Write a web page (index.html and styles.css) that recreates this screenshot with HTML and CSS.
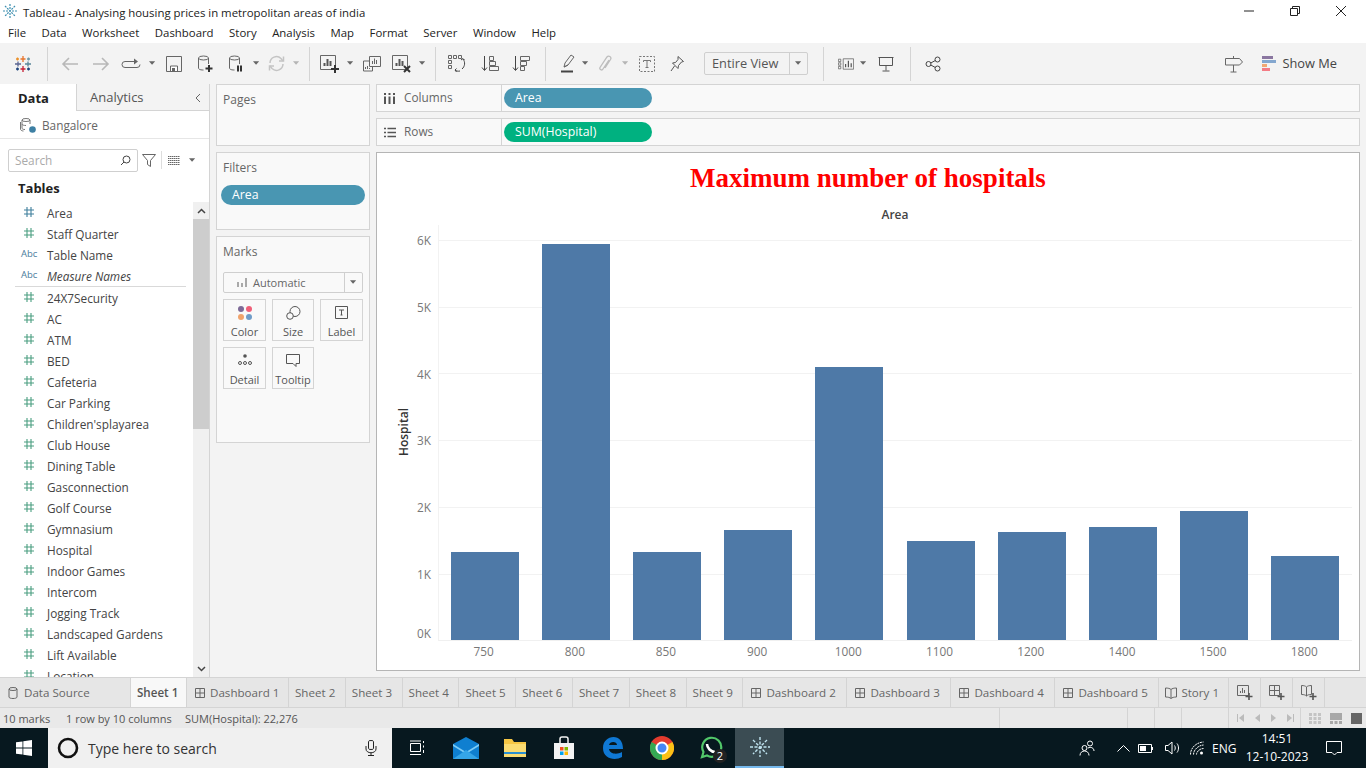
FILE: index.html
```html
<!DOCTYPE html>
<html lang="en">
<head>
  <meta charset="UTF-8">
  <title>Tableau - Analysing housing prices in metropolitan areas of india</title>
  <link rel="stylesheet" href="styles.css">
</head>
<body>
  <svg class="defs">
    <symbol id="num" viewBox="0 0 12 12"><path d="M4 1v10M8 1v10M1 4h10M1 8h10" fill="none" stroke="currentColor" stroke-width="1.1"/></symbol>
    <symbol id="dash" viewBox="0 0 12 12"><path d="M1.5 1.5h9v9h-9zM6 1.5v9M1.5 6h9" fill="none" stroke="#666"/></symbol>
    <symbol id="caret" viewBox="0 0 8 5"><path d="M0 0h7L3.500 4z" fill="#666"/></symbol>
    <symbol id="caret-off" viewBox="0 0 8 5"><path d="M0 0h7L3.500 4z" fill="#b5b5b5"/></symbol>
  </svg>

  <header class="titlebar">
    <svg class="app-icon" width="14" height="14" viewBox="0 0 14 14"><path d="M7 0v14M0 7h14M2 2l10 10M12 2L2 12" stroke="#3d8fb0" stroke-width="1.200" stroke-dasharray="2 1"/></svg>
    <span class="title-text">Tableau - Analysing housing prices in metropolitan areas of india</span>
    <div class="win-btns">
      <svg width="12" height="12" viewBox="0 0 12 12"><path d="M1 6h10" stroke="#222"/></svg>
      <svg width="12" height="12" viewBox="0 0 12 12"><path d="M1.500 3.500h7v7h-7zM3.500 3V1.500h7v7H9" fill="none" stroke="#222"/></svg>
      <svg width="12" height="12" viewBox="0 0 12 12"><path d="M1 1l10 10M11 1L1 11" stroke="#222"/></svg>
    </div>
  </header>

  <nav class="menubar">
    <span>File</span><span>Data</span><span>Worksheet</span><span>Dashboard</span><span>Story</span><span>Analysis</span><span>Map</span><span>Format</span><span>Server</span><span>Window</span><span>Help</span>
  </nav>

  <div class="toolbar">
    <div class="tb w30"><svg width="18" height="18" viewBox="0 0 18 18" fill="none" stroke-width="1.300"><path d="M9 1v6M6.500 4h5" stroke="#e8762c"/><path d="M9 11v6M6.500 14h5" stroke="#c72035"/><path d="M1 9h6M4 6.500v5" stroke="#5b6591"/><path d="M11 9h6M14 6.500v5" stroke="#59879b"/><path d="M3.500 2.500v3M2 4h3" stroke="#eb912b"/><path d="M14.500 2.500v3M13 4h3" stroke="#7099a6"/><path d="M3.500 12.500v3M2 14h3" stroke="#1f447d"/><path d="M14.500 12.500v3M13 14h3" stroke="#1f447d"/></svg></div>
    <div class="tb w18"><i class="sep"></i></div>
    <div class="tb w28"><svg width="18" height="14" viewBox="0 0 18 14" fill="none" stroke="#b8b8b8" stroke-width="1.600"><path d="M17 7H2M8 1L2 7l6 6"/></svg></div>
    <div class="tb w34"><svg width="18" height="14" viewBox="0 0 18 14" fill="none" stroke="#b8b8b8" stroke-width="1.600"><path d="M1 7h15M10 1l6 6-6 6"/></svg></div>
    <div class="tb w26"><svg width="20" height="12" viewBox="0 0 20 12" fill="none" stroke="#666"><path d="M14 3.500H4a3 3 0 0 0 0 6h12a3 3 0 0 0 3-3"/><path d="M13 .5v6l4-3z" fill="#666" stroke="none"/></svg></div>
    <div class="tb w16"><svg class="cr"><use href="#caret"/></svg></div>
    <div class="tb w28"><svg width="16" height="16" viewBox="0 0 16 16" fill="none" stroke="#666"><path d="M.5.500h15v15H.5z"/><path d="M4.500 15v-5h7v5" fill="#fff"/><path d="M6 12h3v3H6z" fill="#666" stroke="none"/></svg></div>
    <div class="tb w34"><svg width="16" height="18" viewBox="0 0 16 18" fill="none" stroke="#666"><ellipse cx="6.500" cy="3" rx="5" ry="2"/><path d="M1.500 3v10c0 1 1 2 5 2M11.500 3v6"/><path d="M12 10v7M8.500 13.500h7" stroke="#333" stroke-width="2"/></svg></div>
    <div class="tb w28"><svg width="16" height="18" viewBox="0 0 16 18" fill="none" stroke="#666"><ellipse cx="6.500" cy="3" rx="5" ry="2"/><path d="M1.500 3v10c0 1 1 2 5 2M11.500 3v6"/><path d="M10 10.500v6M13 10.500v6" stroke="#333" stroke-width="2"/></svg></div>
    <div class="tb w12"><svg class="cr"><use href="#caret"/></svg></div>
    <div class="tb w28"><svg width="17" height="17" viewBox="0 0 17 17" fill="none" stroke="#c4c4c4" stroke-width="1.500"><path d="M2 8a6.500 6.500 0 0 1 11-4.500L15 6M15 9a6.500 6.500 0 0 1-11 4.500L2 11"/><path d="M15.500 1.500V6H11M1.500 15.500V11H6"/></svg></div>
    <div class="tb w12"><svg class="cr"><use href="#caret-off"/></svg></div>
    <div class="tb w14"><i class="sep"></i></div>
    <div class="tb w28"><svg width="20" height="18" viewBox="0 0 20 18" fill="none" stroke="#666"><path d="M.5.500h15v14H.5z"/><path d="M4.500 11V8M7.500 11V4M10.500 11V6" stroke="#555" stroke-width="2"/><path d="M15 10v8M11 14h8" stroke="#333" stroke-width="2"/></svg></div>
    <div class="tb w12"><svg class="cr"><use href="#caret"/></svg></div>
    <div class="tb w32"><svg width="18" height="16" viewBox="0 0 18 16" fill="none" stroke="#666"><path d="M6.500.500h11v10h-11z"/><path d="M9.500 8V5M11.500 8V2.500M13.500 8V4"/><path d="M6 5H.5v10h9v-4"/><path d="M2.500 13v-2M4.500 13v-3M6.500 13v-1"/></svg></div>
    <div class="tb w28"><svg width="20" height="18" viewBox="0 0 20 18" fill="none" stroke="#666"><path d="M.5.500h15v14H.5z"/><path d="M4.500 11V8M7.500 11V4M10.500 11V6" stroke="#555" stroke-width="2"/><path d="M12 11l6 6M18 11l-6 6" stroke="#333" stroke-width="2"/></svg></div>
    <div class="tb w12"><svg class="cr"><use href="#caret"/></svg></div>
    <div class="tb w14"><i class="sep"></i></div>
    <div class="tb w30"><svg width="18" height="18" viewBox="0 0 18 18" fill="none" stroke="#666"><path d="M.5.500h3v3h-3zM5.500.500h3v3h-3zM10.500.500h3v3h-3zM.5 5.500h3v3h-3zM.5 10.500h3v3h-3z"/><path d="M15 4c2.500 3 2 7.500-1 10M12 16c-2 .5-4 0-5-1" stroke="#444"/><path d="M13 5l2-1.500L16.500 5M8.500 13.500L7 15l1.500 2" stroke="#444"/></svg></div>
    <div class="tb w36"><svg width="18" height="18" viewBox="0 0 18 18" fill="none" stroke="#666"><path d="M3.500 1v14M1 12.500l2.500 3 2.500-3" stroke="#444"/><path d="M8.500 1.500h4v4h-4zM8.500 6.500h6v4h-6zM8.500 11.500h9v4h-9z"/></svg></div>
    <div class="tb w26"><svg width="18" height="18" viewBox="0 0 18 18" fill="none" stroke="#666"><path d="M3.500 1v14M1 12.500l2.500 3 2.500-3" stroke="#444"/><path d="M8.500 1.500h9v4h-9zM8.500 6.500h6v4h-6zM8.500 11.500h4v4h-4z"/></svg></div>
    <div class="tb w22"><i class="sep"></i></div>
    <div class="tb w24"><svg width="14" height="19" viewBox="0 0 14 19" fill="none" stroke="#666"><path d="M3 13l1-4 6-8 3 2-6 8zM3 13l4-2"/><path d="M0 17.500h12" stroke="#444" stroke-width="2"/></svg></div>
    <div class="tb w10"><svg class="cr"><use href="#caret"/></svg></div>
    <div class="tb w30"><svg width="14" height="18" viewBox="0 0 14 18" fill="none" stroke="#bdbdbd" stroke-width="1.300"><path d="M11 5l-6 9c-1 2-4 .5-3-1.500L9 2c1.500-2 5 0 3.500 2.500L7 13"/></svg></div>
    <div class="tb w10"><svg class="cr"><use href="#caret-off"/></svg></div>
    <div class="tb w34"><svg width="16" height="16" viewBox="0 0 16 16" fill="none" stroke="#777"><path d="M.5.500h15v15H.5z" stroke-dasharray="2 1.500"/><path d="M4.500 4.500h7M8 4.500v7M6.500 11.500h3M4.500 4.500V6M11.500 4.500V6"/></svg></div>
    <div class="tb w26"><svg width="14" height="16" viewBox="0 0 14 16" fill="none" stroke="#555"><path d="M8 .5l5.500 5-2 .5-3 3.500-.5 3L2.500 7l3-.5L8 3.500zM4.500 10l-3.500 5"/></svg></div>
    <div class="tb w14"></div>
    <div class="fit-select"><span class="fit-text">Entire View</span><span class="fit-drop"><svg class="cr"><use href="#caret"/></svg></span></div>
    <div class="tb w30"><i class="sep"></i></div>
    <div class="tb w16"><svg width="20" height="14" viewBox="0 0 20 14" fill="none" stroke="#666"><path d="M.5 1h3v3h-3zM.5 5.500h3v3h-3zM.5 10h3v3h-3zM6.500.5h13v13h-13z"/><path d="M9.500 11V7M13 11V3M16.500 11V6" stroke="#555" stroke-width="1.500"/></svg></div>
    <div class="tb w18 cr-left"><svg class="cr"><use href="#caret"/></svg></div>
    <div class="tb w28"><svg width="16" height="16" viewBox="0 0 16 16" fill="none" stroke="#555"><path d="M.5 1.500h15M1.500 1.500v8h13v-8M8 9.500v5M4.500 15h7"/></svg></div>
    <div class="tb w20"><i class="sep"></i></div>
    <div class="tb w26"><svg width="16" height="16" viewBox="0 0 16 16" fill="none" stroke="#444"><circle cx="3.500" cy="8" r="2.500"/><circle cx="12.500" cy="3.500" r="2.500"/><circle cx="12.500" cy="12.500" r="2.500"/><path d="M5.800 7l4.500-2.500M5.800 9l4.500 2.500"/></svg></div>
    <div class="toolbar-right">
      <svg width="18" height="18" viewBox="0 0 18 18" fill="none" stroke="#666"><path d="M.5 3.500h14l3 3.500-3 3H.5zM8.500 1v2.500M8.500 10v7M5.500 17h6"/></svg>
      <span class="showme">
        <svg width="15" height="15" viewBox="0 0 15 15"><path d="M0 0h11v3H0z" fill="#8a76a0"/><path d="M0 4h14v3H0z" fill="#84a7cf"/><path d="M0 8h5v3H0z" fill="#f2a873"/><path d="M0 12h8v3H0z" fill="#f47c85"/></svg>
        Show Me
      </span>
    </div>
  </div>

  <main class="workspace">
    <aside class="data-pane">
      <div class="pane-tabs">
        <span class="pane-tab active">Data</span>
        <span class="pane-tab">Analytics</span>
        <svg class="collapse" width="8" height="10" viewBox="0 0 8 10"><path d="M6 1L2 5l4 4" fill="none" stroke="#666"/></svg>
      </div>
      <div class="source">
        <svg width="16" height="16" viewBox="0 0 16 16" fill="none" stroke="#777"><ellipse cx="6" cy="3" rx="4" ry="1.500"/><path d="M2 3v8c0 1 1 1.500 3 1.500M10 3v4M.5 5v7c0 1 1 2 3 2"/><path d="M2 7c0 1 2 1.500 4 1.500"/><circle cx="12.500" cy="12.500" r="3.300" fill="#3d7fa3" stroke="none"/></svg>
        Bangalore
      </div>
      <div class="search-row">
        <div class="search"><span>Search</span><svg width="11" height="11" viewBox="0 0 11 11" fill="none" stroke="#444"><circle cx="6.500" cy="4.500" r="3.500"/><path d="M4 7L1 10"/></svg></div>
        <svg width="14" height="13" viewBox="0 0 14 13" fill="none" stroke="#666"><path d="M.5.500h13L8.500 6.500v6l-3-2v-4z"/></svg>
        <i class="mini-sep"></i>
        <svg width="12" height="9" viewBox="0 0 12 9" fill="none" stroke="#666" stroke-dasharray="1.500 .5"><path d="M0 .5h12M0 2.500h12M0 4.500h12M0 6.500h12M0 8.500h12"/></svg>
        <svg class="cr"><use href="#caret"/></svg>
      </div>
      <h2 class="tables-head">Tables</h2>
      <div class="field-area">
        <ul class="fields">
          <li class="field dim"><svg class="hash"><use href="#num"/></svg>Area</li>
          <li class="field"><svg class="hash"><use href="#num"/></svg>Staff Quarter</li>
          <li class="field"><span class="abc">Abc</span>Table Name</li>
          <li class="field split"><span class="abc">Abc</span><em>Measure Names</em></li>
          <li class="field"><svg class="hash"><use href="#num"/></svg>24X7Security</li>
          <li class="field"><svg class="hash"><use href="#num"/></svg>AC</li>
          <li class="field"><svg class="hash"><use href="#num"/></svg>ATM</li>
          <li class="field"><svg class="hash"><use href="#num"/></svg>BED</li>
          <li class="field"><svg class="hash"><use href="#num"/></svg>Cafeteria</li>
          <li class="field"><svg class="hash"><use href="#num"/></svg>Car Parking</li>
          <li class="field"><svg class="hash"><use href="#num"/></svg>Children'splayarea</li>
          <li class="field"><svg class="hash"><use href="#num"/></svg>Club House</li>
          <li class="field"><svg class="hash"><use href="#num"/></svg>Dining Table</li>
          <li class="field"><svg class="hash"><use href="#num"/></svg>Gasconnection</li>
          <li class="field"><svg class="hash"><use href="#num"/></svg>Golf Course</li>
          <li class="field"><svg class="hash"><use href="#num"/></svg>Gymnasium</li>
          <li class="field"><svg class="hash"><use href="#num"/></svg>Hospital</li>
          <li class="field"><svg class="hash"><use href="#num"/></svg>Indoor Games</li>
          <li class="field"><svg class="hash"><use href="#num"/></svg>Intercom</li>
          <li class="field"><svg class="hash"><use href="#num"/></svg>Jogging Track</li>
          <li class="field"><svg class="hash"><use href="#num"/></svg>Landscaped Gardens</li>
          <li class="field"><svg class="hash"><use href="#num"/></svg>Lift Available</li>
          <li class="field"><svg class="hash"><use href="#num"/></svg>Location</li>
        </ul>
        <div class="scrollbar">
          <div class="scroll-btn"><svg width="9" height="6" viewBox="0 0 9 6"><path d="M1 5l3.500-3.500L8 5" fill="none" stroke="#444" stroke-width="1.500"/></svg></div>
          <div class="scroll-thumb"></div>
          <div class="scroll-btn end"><svg width="9" height="6" viewBox="0 0 9 6"><path d="M1 1l3.500 3.500L8 1" fill="none" stroke="#444" stroke-width="1.500"/></svg></div>
        </div>
      </div>
    </aside>

    <section class="cards">
      <div class="card pages"><h3>Pages</h3></div>
      <div class="card filters">
        <h3>Filters</h3>
        <div class="pill blue">Area</div>
      </div>
      <div class="card marks">
        <h3>Marks</h3>
        <div class="mark-select">
          <svg width="10" height="9" viewBox="0 0 10 9"><path d="M0 4h2v5H0zM4 5h2v4H4zM8 0h2v9H8z" fill="#a9a9a9"/></svg>
          <span>Automatic</span>
          <span class="mark-drop"><svg class="cr"><use href="#caret"/></svg></span>
        </div>
        <div class="mark-grid">
          <div class="mark-btn"><svg width="16" height="14" viewBox="0 0 16 14"><circle cx="4" cy="3" r="3" fill="#7d6a97"/><circle cx="12" cy="3" r="3" fill="#ef5f78"/><circle cx="4" cy="11" r="3" fill="#f0a36c"/><circle cx="12" cy="11" r="3" fill="#6f9cc8"/></svg>Color</div>
          <div class="mark-btn"><svg width="15" height="14" viewBox="0 0 15 14" fill="none" stroke="#555"><circle cx="9" cy="5.500" r="5"/><circle cx="4" cy="10" r="3.300" fill="#f9f9f9"/></svg>Size</div>
          <div class="mark-btn"><svg width="13" height="13" viewBox="0 0 13 13" fill="none" stroke="#555"><path d="M.5.500h12v12H.5zM4 4h5M6.500 4v5M5.500 9h2"/></svg>Label</div>
          <div class="mark-btn"><svg width="14" height="12" viewBox="0 0 14 12" fill="none" stroke="#555"><circle cx="7" cy="2" r="1.800" fill="#555" stroke="none"/><circle cx="2" cy="9" r="1.500"/><circle cx="7" cy="9" r="1.500"/><circle cx="12" cy="9" r="1.500"/></svg>Detail</div>
          <div class="mark-btn"><svg width="14" height="13" viewBox="0 0 14 13" fill="none" stroke="#555"><path d="M.5.500h13v9H10v3l-3-3H.5z"/></svg>Tooltip</div>
        </div>
      </div>
    </section>

    <section class="sheet">
      <div class="shelf">
        <div class="shelf-label"><svg width="12" height="11" viewBox="0 0 12 11"><path d="M1 0v2M5.500 0v2M10 0v2" stroke="#555" stroke-width="2"/><path d="M1 3.500V11M5.500 3.500V11M10 3.500V11" stroke="#555" stroke-width="2"/></svg><span>Columns</span></div>
        <div class="shelf-body"><div class="pill blue shelf-pill">Area</div></div>
      </div>
      <div class="shelf">
        <div class="shelf-label"><svg width="12" height="11" viewBox="0 0 12 11"><path d="M0 1.500h2M0 5.500h2M0 9.500h2M3.500 1.500H12M3.500 5.500H12M3.500 9.500H12" stroke="#555" stroke-width="1.600"/></svg><span>Rows</span></div>
        <div class="shelf-body"><div class="pill green shelf-pill">SUM(Hospital)</div></div>
      </div>

      <div class="view">
        <h1 class="view-title">Maximum number of hospitals</h1>
        <div class="chart">
          <div class="y-title"><span>Hospital</span></div>
          <div class="y-axis">
            <span>6K</span><span>5K</span><span>4K</span><span>3K</span><span>2K</span><span>1K</span><span>0K</span>
          </div>
          <div class="chart-main">
            <div class="x-title">Area</div>
            <div class="plot">
              <div class="grid-row"></div><div class="grid-row"></div><div class="grid-row"></div>
              <div class="grid-row"></div><div class="grid-row"></div><div class="grid-row"></div>
              <div class="bars">
                <div class="bin"><div class="bar" style="height:88px"></div></div>
                <div class="bin"><div class="bar" style="height:396px"></div></div>
                <div class="bin"><div class="bar" style="height:88px"></div></div>
                <div class="bin"><div class="bar" style="height:110px"></div></div>
                <div class="bin"><div class="bar" style="height:273px"></div></div>
                <div class="bin"><div class="bar" style="height:99px"></div></div>
                <div class="bin"><div class="bar" style="height:108px"></div></div>
                <div class="bin"><div class="bar" style="height:113px"></div></div>
                <div class="bin"><div class="bar" style="height:129px"></div></div>
                <div class="bin"><div class="bar" style="height:84px"></div></div>
              </div>
            </div>
            <div class="x-axis">
              <span>750</span><span>800</span><span>850</span><span>900</span><span>1000</span><span>1100</span><span>1200</span><span>1400</span><span>1500</span><span>1800</span>
            </div>
          </div>
        </div>
      </div>
    </section>
  </main>

  <div class="tabs">
    <div class="tab source-tab"><svg width="10" height="12" viewBox="0 0 10 12" fill="none" stroke="#666"><ellipse cx="5" cy="2" rx="4" ry="1.500"/><path d="M1 2v8c0 1 2 1.500 4 1.500s4-.5 4-1.500V2"/></svg>Data Source</div>
    <div class="tab current">Sheet 1</div>
    <div class="tab dash first"><svg class="tab-icon"><use href="#dash"/></svg>Dashboard 1</div>
    <div class="tab plain">Sheet 2</div>
    <div class="tab plain">Sheet 3</div>
    <div class="tab plain">Sheet 4</div>
    <div class="tab plain">Sheet 5</div>
    <div class="tab plain">Sheet 6</div>
    <div class="tab plain">Sheet 7</div>
    <div class="tab plain">Sheet 8</div>
    <div class="tab plain">Sheet 9</div>
    <div class="tab dash"><svg class="tab-icon"><use href="#dash"/></svg>Dashboard 2</div>
    <div class="tab dash"><svg class="tab-icon"><use href="#dash"/></svg>Dashboard 3</div>
    <div class="tab dash"><svg class="tab-icon"><use href="#dash"/></svg>Dashboard 4</div>
    <div class="tab dash"><svg class="tab-icon"><use href="#dash"/></svg>Dashboard 5</div>
    <div class="tab story"><svg width="12" height="12" viewBox="0 0 12 12" fill="none" stroke="#666"><path d="M6 2.500C5 1.500 3 1 .5 1v9c2.500 0 4.500.5 5.500 1.500 1-1 3-1.500 5.500-1.500V1C9 1 7 1.500 6 2.500zM6 2.500v9"/></svg>Story 1</div>
    <div class="tab add"><svg width="16" height="15" viewBox="0 0 16 15" fill="none" stroke="#666"><path d="M.5.500h11v10H.5zM3.500 8V6M5.500 8V3M7.500 8V5"/><path d="M12 8v7M8.500 11.500h7" stroke="#555" stroke-width="1.600"/></svg></div>
    <div class="tab add"><svg width="16" height="15" viewBox="0 0 16 15" fill="none" stroke="#666"><path d="M.5.500h10v10H.5zM5.500.5v10M.5 5.500h10"/><path d="M12 8v7M8.500 11.500h7" stroke="#555" stroke-width="1.600"/></svg></div>
    <div class="tab add"><svg width="16" height="15" viewBox="0 0 16 15" fill="none" stroke="#666"><path d="M5.500 2C4.500 1 3 .5.500.5v9c2.500 0 4 .5 5 1.500 1-1 2-1.500 5-1.500v-9C8 .5 6.500 1 5.500 2zM5.500 2v9"/><path d="M12 8v7M8.500 11.500h7" stroke="#555" stroke-width="1.600"/></svg></div>
  </div>

  <footer class="statusbar">
    <span class="stat marks-count">10 marks</span>
    <span class="stat rows-count">1 row by 10 columns</span>
    <span class="stat sum">SUM(Hospital): 22,276</span>
    <i class="stat-cell c1"></i><i class="stat-cell c2"></i><i class="stat-cell c3"></i><i class="stat-cell c4"></i><i class="stat-cell c5"></i>
    <div class="pager">
      <svg width="7" height="8" viewBox="0 0 7 8"><path d="M0 0h1v8H0zM7 0v8L2 4z" fill="#bbb"/></svg>
      <svg width="5" height="8" viewBox="0 0 5 8"><path d="M5 0v8L0 4z" fill="#bbb"/></svg>
      <svg width="5" height="8" viewBox="0 0 5 8"><path d="M0 0v8l5-4z" fill="#bbb"/></svg>
      <svg width="7" height="8" viewBox="0 0 7 8"><path d="M6 0h1v8H6zM0 0v8l5-4z" fill="#bbb"/></svg>
    </div>
    <div class="thumbs">
      <svg width="12" height="11" viewBox="0 0 12 11"><path d="M0 0h3v3H0zM4.500 0h3v3h-3zM9 0h3v3H9zM0 4h3v3H0zM4.500 4h3v3h-3zM9 4h3v3H9zM0 8h3v3H0zM4.500 8h3v3h-3zM9 8h3v3H9z" fill="#c4c4c4"/></svg>
      <svg width="12" height="11" viewBox="0 0 12 11"><path d="M0 0h12v7H0zM0 8h3v3H0zM4.500 8h3v3h-3zM9 8h3v3H9z" fill="#a8a8a8"/></svg>
      <svg width="11" height="11" viewBox="0 0 11 11"><path d="M0 0h11v11H0z" fill="#666"/></svg>
    </div>
  </footer>

  <div class="taskbar">
    <div class="start"><svg width="16" height="16" viewBox="0 0 16 16"><path d="M0 2.300l6.500-.9v6.200H0zM7.300 1.300L16 0v7.600H7.300zM0 8.400h6.500v6.200L0 13.700zM7.300 8.400H16V16l-8.700-1.300z" fill="#fff"/></svg></div>
    <div class="task-search">
      <svg width="22" height="22" viewBox="0 0 22 22"><circle cx="11" cy="11" r="9" fill="none" stroke="#111" stroke-width="2.600"/></svg>
      <span>Type here to search</span>
      <svg class="mic" width="12" height="16" viewBox="0 0 12 16" fill="none" stroke="#222"><path d="M3.500 1.500a2.500 1 0 0 1 5 0v7a2.500 1 0 0 1-5 0zM1 6v3c0 5 10 5 10 0V6M6 13v2.500M3 15.500h6"/></svg>
    </div>
    <div class="task-apps">
      <div class="app"><svg width="16" height="16" viewBox="0 0 16 16" fill="none" stroke="#fff"><path d="M1.500 3.500h10v8h-10zM1 1h11M1 14.500h11M14.500 1v2M14.500 5.500v2M14.500 10v3"/></svg></div>
      <div class="app"><svg width="26" height="22" viewBox="0 0 26 22"><path d="M0 7l13-7 13 7v15H0z" fill="#0f7fd0"/><path d="M0 7l13 8 13-8v2l-13 8L0 9z" fill="#7dccf5"/><path d="M0 22l13-9 13 9z" fill="#35a5e8"/></svg></div>
      <div class="app"><svg width="24" height="20" viewBox="0 0 24 20"><path d="M1 1h8l2 3h12v15H1z" fill="#f6c644"/><path d="M1 6h22v13H1z" fill="#fbdc72"/><path d="M1 14h22v2H1z" fill="#2a8fd0"/></svg></div>
      <div class="app"><svg width="22" height="24" viewBox="0 0 22 24"><path d="M1 7h20v16H1z" fill="#f3f3f3"/><path d="M7 7V3a2 2 0 0 1 2-2h4a2 2 0 0 1 2 2v4" fill="none" stroke="#f3f3f3" stroke-width="1.500"/><path d="M7 11h3.500v3.500H7z" fill="#f25022"/><path d="M11.500 11H15v3.500h-3.500z" fill="#7fba00"/><path d="M7 15.500h3.500V19H7z" fill="#00a4ef"/><path d="M11.500 15.500H15V19h-3.500z" fill="#ffb900"/></svg></div>
      <div class="app"><svg width="22" height="24" viewBox="0 0 22 24"><path d="M1 12C1 5 6 1 11.500 1 17 1 21 5 21 13H7c.5 5 8 6 13 3v5c-7 4-19 2-19-9zM7 9h8c0-4-7.500-4-8 0z" fill="#0f78d4"/></svg></div>
      <div class="app"><svg width="24" height="24" viewBox="0 0 24 24"><circle cx="12" cy="12" r="12" fill="#e33b2e"/><path d="M12 12L22.400 6A12 12 0 0 1 12 24z" fill="#fbc116"/><path d="M12 12L12 24A12 12 0 0 1 1.600 6z" fill="#35a853"/><circle cx="12" cy="12" r="5.500" fill="#4587f4" stroke="#fff" stroke-width="2"/></svg></div>
      <div class="app wa"><svg width="24" height="24" viewBox="0 0 24 24" fill="none"><path d="M3 21l1.500-5A9.500 9.500 0 1 1 8 19.500z" stroke="#52c86a" stroke-width="2.200"/><path d="M8 8c0 4 4 8 8 8" stroke="#fff" stroke-width="2.500"/></svg><b class="badge">2</b></div>
      <div class="app running"><svg width="22" height="22" viewBox="0 0 22 22" fill="none" stroke="#bfe3ef" stroke-width="1.400"><path d="M11 1v20M1 11h20M4 4l14 14M18 4L4 18" stroke-dasharray="3 1.500"/></svg></div>
    </div>
    <div class="tray">
      <svg class="t-people" width="16" height="16" viewBox="0 0 16 16" fill="none" stroke="#fff"><circle cx="5.500" cy="8" r="2.500"/><circle cx="11" cy="3.500" r="2.500"/><path d="M1 15.500c0-6 9-6 9 0M9 8c3-1.500 6 0 6 3"/></svg>
      <svg class="t-chev" width="13" height="7" viewBox="0 0 13 7"><path d="M.5 6.500l6-6 6 6" fill="none" stroke="#fff"/></svg>
      <svg class="t-batt" width="15" height="9" viewBox="0 0 15 9" fill="none" stroke="#fff"><path d="M.5.500h13v8H.5z"/><path d="M2 2h6v5H2z" fill="#fff" stroke="none"/><path d="M14.500 3v3"/></svg>
      <svg class="t-vol" width="16" height="14" viewBox="0 0 16 14" fill="none" stroke="#fff"><path d="M.5 4.500h2.500L7 1v12l-4-3.500H.5zM9.500 4.500c1 1.500 1 3.500 0 5M12 2.500c2 2.500 2 6.500 0 9"/></svg>
      <svg class="t-wifi" width="14" height="14" viewBox="0 0 14 14" fill="none" stroke="#fff"><path d="M.5 13.500C.5 7 6 1.500 13.500 1M3.500 13.500C3.500 9 8 4.500 13.500 4M6.500 13.500C6.500 11 9.500 7.500 13.500 7.500" stroke-dasharray="2 .7"/><circle cx="11.500" cy="12" r="1.500" fill="#fff" stroke="none"/></svg>
      <span class="t-lang">ENG</span>
      <span class="t-clock"><span>14:51</span><span>12-10-2023</span></span>
      <svg class="t-note" width="16" height="15" viewBox="0 0 16 15" fill="none" stroke="#fff"><path d="M.5.500h15v11H11L8.500 14 6 11.500H.5z"/></svg>
    </div>
  </div>
</body>
</html>
```

FILE: styles.css
```css
* {
  box-sizing: border-box;
}

body {
  margin: 0;
  width: 1366px;
  height: 768px;
  overflow: hidden;
  background-color: #f3f3f3;
  font-family: "Open Sans", "Noto Sans", sans-serif;
  font-size: 11.800px;
  color: #444;
}

.defs {
  position: absolute;
  width: 0;
  height: 0;
}

.cr {
  width: 7px;
  height: 5px;
  flex: none;
}

/* title + menu */
.titlebar {
  height: 21px;
  background-color: #fff;
  display: flex;
  align-items: center;
  padding: 3px 0 0 3px;
  color: #222;
  font-size: 11.400px;
}

.app-icon {
  margin-top: -3px;
}

.title-text {
  margin-left: 6px;
}

.win-btns {
  margin: -3px 0 0 auto;
  display: flex;
  gap: 34px;
  padding-right: 19px;
}

.menubar {
  height: 22px;
  background-color: #fff;
  display: flex;
  align-items: center;
  gap: 15.500px;
  padding-left: 8px;
  color: #222;
  font-size: 11.400px;
}

/* toolbar */
.toolbar {
  height: 41px;
  display: flex;
  align-items: center;
  padding-left: 8px;
  background-color: #f3f3f3;
}

.tb {
  flex: none;
  height: 36px;
  display: flex;
  align-items: center;
  justify-content: center;
}

.w10 { width: 10px; }
.w12 { width: 12px; }
.w14 { width: 14px; }
.w16 { width: 16px; }
.w18 { width: 18px; }
.w20 { width: 20px; }
.w22 { width: 22px; }
.w24 { width: 24px; }
.w26 { width: 26px; }
.w28 { width: 28px; }
.w30 { width: 30px; }
.w32 { width: 32px; }
.w34 { width: 34px; }
.w36 { width: 36px; }

.sep {
  width: 1px;
  height: 34px;
  background-color: #d4d4d4;
}

.fit-select {
  width: 104px;
  height: 23px;
  flex: none;
  display: flex;
  align-items: center;
  border: 1px solid #cfcfcf;
  border-radius: 2px;
  font-size: 12.800px;
  color: #555;
}

.fit-text {
  flex: 1;
  padding: 0 0 2px 7px;
}

.fit-drop {
  width: 18px;
  height: 100%;
  border-left: 1px solid #cfcfcf;
  display: flex;
  align-items: center;
  justify-content: center;
}

.toolbar-right {
  margin-left: auto;
  display: flex;
  align-items: center;
  gap: 18px;
  padding-right: 29px;
}

.showme {
  display: flex;
  align-items: center;
  gap: 6px;
  padding-bottom: 1px;
  font-size: 12.800px;
  color: #444;
}

.showme svg {
  margin: 1px 0 0 1px;
}

/* main area */
.workspace {
  height: 593px;
  display: flex;
}

.data-pane {
  width: 210px;
  flex: none;
  background-color: #fff;
  border-right: 1px solid #d4d4d4;
  display: flex;
  flex-direction: column;
  overflow: hidden;
}

.pane-tabs {
  height: 27px;
  flex: none;
  display: flex;
  align-items: center;
  background-color: #f3f3f3;
  position: relative;
}

.pane-tab {
  height: 100%;
  display: flex;
  align-items: center;
  padding: 0 14px 0 13px;
  font-size: 13px;
  flex: 1;
  border-bottom: 1px solid #d4d4d4;
  color: #555;
}

.pane-tab.active {
  flex: none;
  width: 77px;
  padding-left: 18px;
  background-color: #fff;
  border-right: 1px solid #d4d4d4;
  border-bottom: none;
  font-weight: 700;
  color: #222;
}

.collapse {
  position: absolute;
  right: 7px;
  top: 9px;
}

.source {
  height: 28px;
  flex: none;
  display: flex;
  align-items: center;
  gap: 6px;
  padding-left: 20px;
  border-bottom: 1px solid #e6e6e6;
  color: #666;
}

.search-row {
  height: 36px;
  flex: none;
  display: flex;
  align-items: center;
  padding: 6px 0 0 8px;
}

.search {
  width: 130px;
  height: 23px;
  display: flex;
  align-items: center;
  justify-content: space-between;
  padding: 0 6px;
  border: 1px solid #cfcfcf;
  border-radius: 2px;
  color: #aaa;
  margin-right: 4px;
}

.mini-sep {
  width: 1px;
  height: 18px;
  background-color: #ddd;
  margin: 0 6px 0 5px;
}

.search-row .cr {
  margin-left: 9px;
}

.tables-head {
  height: 27px;
  flex: none;
  margin: 0;
  padding: 4px 0 0 18px;
  font-size: 13px;
  font-weight: 700;
  color: #222;
}

.field-area {
  flex: 1;
  min-height: 0;
  display: flex;
  overflow: hidden;
}

.fields {
  flex: 1;
  margin: 0;
  padding: 0;
  list-style: none;
  overflow: hidden;
}

.field {
  height: 21px;
  display: flex;
  align-items: center;
  padding-left: 47px;
  position: relative;
  color: #444;
  white-space: nowrap;
}

.field.split {
  margin-bottom: 1px;
}

.field.split::after {
  content: "";
  position: absolute;
  left: 15px;
  right: 7px;
  bottom: -1px;
  height: 1px;
  background-color: #d9d9d9;
}

.hash {
  position: absolute;
  left: 23px;
  top: 4px;
  width: 12px;
  height: 12px;
  color: #4a9e80;
}

.field.dim .hash {
  color: #3f7f9c;
}

.abc {
  position: absolute;
  left: 21px;
  top: 3px;
  font-size: 9.500px;
  color: #4a7c9c;
}

.field em {
  font-style: italic;
}

.scrollbar {
  width: 16px;
  flex: none;
  background-color: #f0f0f0;
  display: flex;
  flex-direction: column;
}

.scroll-btn {
  height: 17px;
  flex: none;
  display: flex;
  align-items: center;
  justify-content: center;
}

.scroll-btn.end {
  margin-top: auto;
}

.scroll-thumb {
  height: 210px;
  background-color: #cdcdcd;
}

.cards {
  width: 154px;
  flex: none;
  margin-left: 6px;
  display: flex;
  flex-direction: column;
  gap: 6px;
}

.card {
  border: 1px solid #d4d4d4;
  background-color: #f9f9f9;
  padding: 0 4px;
}

.card h3 {
  margin: 0;
  padding: 6px 2px 0;
  font-size: 12px;
  font-weight: 400;
  color: #666;
}

.pages {
  height: 62px;
}

.filters {
  height: 78px;
}

.marks {
  height: 207px;
  padding: 0 6px;
}

.filters h3 {
  padding-bottom: 9px;
}

.marks h3 {
  padding: 6px 0 0;
}

.pill {
  height: 20px;
  border-radius: 10px;
  padding: 0 0 1px 11px;
  display: flex;
  align-items: center;
  color: #fff;
  font-size: 12.300px;
}

.blue {
  background-color: #4996b2;
}

.green {
  background-color: #00b180;
}

.mark-select {
  margin-top: 12px;
  height: 21px;
  display: flex;
  align-items: center;
  gap: 6px;
  padding-left: 13px;
  border: 1px solid #cfcfcf;
  border-radius: 2px;
  color: #666;
  font-size: 11px;
}

.mark-drop {
  margin-left: auto;
  width: 18px;
  height: 100%;
  border-left: 1px solid #cfcfcf;
  display: flex;
  align-items: center;
  justify-content: center;
}

.mark-grid {
  margin-top: 6px;
  display: grid;
  grid-template-columns: 43px 42px 43px;
  grid-auto-rows: 42px;
  gap: 6px;
  column-gap: 6px;
}

.mark-btn {
  border: 1px solid #d4d4d4;
  display: flex;
  flex-direction: column;
  align-items: center;
  justify-content: space-between;
  padding: 6px 0 1px;
  font-size: 11px;
  color: #555;
}

/* shelves + view */
.sheet {
  width: 984px;
  flex: none;
  margin-left: 6px;
  display: flex;
  flex-direction: column;
  gap: 6px;
}

.shelf {
  height: 28px;
  flex: none;
  display: flex;
  border: 1px solid #d4d4d4;
  background-color: #f9f9f9;
}

.shelf-label {
  width: 125px;
  flex: none;
  display: flex;
  align-items: center;
  gap: 8px;
  padding-left: 7px;
  border-right: 1px solid #d4d4d4;
  color: #666;
}

.shelf-label span {
  padding-bottom: 2px;
}

.shelf-body {
  flex: 1;
  display: flex;
  align-items: center;
  padding-left: 2px;
}

.shelf-pill {
  width: 148px;
}

.view {
  height: 519px;
  flex: none;
  background-color: #fff;
  border: 1px solid #b5b5b5;
  display: flex;
  flex-direction: column;
}

.view-title {
  margin: 0;
  height: 51px;
  flex: none;
  padding-top: 10px;
  text-align: center;
  font-family: "Liberation Serif", serif;
  font-size: 27px;
  font-weight: 700;
  color: #f00;
}

.chart {
  flex: 1;
  display: flex;
  min-height: 0;
}

.y-title {
  width: 50px;
  flex: none;
  padding-left: 18px;
  display: flex;
  align-items: center;
}

.y-title span {
  writing-mode: vertical-rl;
  transform: rotate(180deg);
  font-size: 12px;
  font-weight: 600;
  color: #333;
  margin-bottom: 9px;
}

.y-axis {
  width: 4px;
  flex: none;
  display: flex;
  flex-direction: column;
  align-items: flex-end;
  padding-top: 28px;
  color: #777;
}

.y-axis span {
  height: 66.800px;
  line-height: 16px;
  flex: none;
  white-space: nowrap;
}

.y-axis span:last-child {
  margin-top: -8px;
}

.chart-main {
  width: 914px;
  margin-left: 7px;
  flex: none;
}

.x-title {
  height: 21px;
  text-align: center;
  font-size: 12px;
  font-weight: 600;
  color: #444;
  line-height: 22px;
}

.plot {
  height: 416px;
  padding-top: 14.800px;
  position: relative;
  border-left: 1px solid #f2f2f2;
  border-bottom: 1px solid #f0f0f0;
}

.grid-row {
  height: 66.800px;
  border-top: 1px solid #f2f2f2;
}

.bars {
  position: absolute;
  inset: 0;
  display: flex;
  align-items: flex-end;
}

.bin {
  width: 91.200px;
  flex: none;
  display: flex;
  justify-content: center;
}

.bar {
  width: 68px;
  background-color: #4e79a7;
}

.x-axis {
  display: flex;
  padding-top: 2px;
  color: #777;
}

.x-axis span {
  width: 91.200px;
  flex: none;
  text-align: center;
}

/* sheet tabs */
.tabs {
  height: 31px;
  display: flex;
  background-color: #e6e6e6;
  border-top: 1px solid #d4d4d4;
  border-bottom: 1px solid #d4d4d4;
  font-size: 11.600px;
}

.tab {
  flex: none;
  display: flex;
  align-items: center;
  gap: 4px;
  padding: 0 0 0 6px;
  border-right: 1px solid #d4d4d4;
  color: #666;
  white-space: nowrap;
}

.tab-icon {
  width: 12px;
  height: 12px;
}

.source-tab {
  width: 131px;
  padding-left: 8px;
  gap: 6px;
}

.current {
  width: 56px;
  background-color: #f8f8f8;
  font-weight: 600;
  color: #555;
}

.plain {
  width: 56.800px;
}

.dash {
  width: 104px;
  padding-left: 7px;
}

.dash.first {
  width: 102px;
}

.story {
  width: 70px;
}

.add {
  width: 32px;
  justify-content: center;
  padding: 0;
}

/* status bar */
.statusbar {
  height: 20px;
  display: flex;
  align-items: center;
  background-color: #e9e9e9;
  font-size: 11px;
  color: #555;
  position: relative;
}

.marks-count {
  width: 66px;
  padding-left: 3px;
}

.rows-count {
  width: 119px;
}

.stat-cell {
  height: 100%;
  width: 1px;
  flex: none;
  background-color: #d4d4d4;
}

.c1 { margin-left: 686px; }
.c2 { margin-left: 127px; }
.c3 { margin-left: 26px; }
.c4 { margin-left: 26px; }
.c5 { margin-left: 46px; }
.sum { width: 128px; }

.pager {
  margin-left: 8px;
  display: flex;
  gap: 11px;
  align-items: center;
}

.thumbs {
  margin-left: 6px;
  padding-left: 8px;
  height: 100%;
  border-left: 1px solid #d4d4d4;
  display: flex;
  gap: 9px;
  align-items: center;
}

/* windows taskbar */
.taskbar {
  height: 40px;
  display: flex;
  background-color: #07181f;
  color: #fff;
}

.start {
  width: 48px;
  flex: none;
  display: flex;
  align-items: center;
  justify-content: center;
}

.task-search {
  width: 344px;
  flex: none;
  background-color: #f0f0f0;
  display: flex;
  align-items: center;
  padding-left: 9px;
  gap: 9px;
  font-size: 14px;
  color: #333;
}

.mic {
  margin-left: auto;
  margin-right: 15px;
}

.task-apps {
  display: flex;
}

.app {
  width: 49px;
  flex: none;
  display: flex;
  align-items: center;
  justify-content: center;
  position: relative;
}

.running {
  background-color: #3b4c53;
  border-bottom: 2px solid #76b9ed;
}

.badge {
  position: absolute;
  left: 27px;
  bottom: 5px;
  width: 14px;
  height: 14px;
  border-radius: 7px;
  background-color: #222;
  color: #fff;
  font-size: 11px;
  font-weight: 400;
  line-height: 14px;
  text-align: center;
}

.tray {
  margin-left: auto;
  display: flex;
  align-items: center;
  padding-right: 24px;
  font-size: 12px;
}

.t-chev { margin-left: 22px; }
.t-batt { margin-left: 8px; }
.t-vol { margin-left: 12px; }
.t-wifi { margin-left: 9px; }
.t-lang { margin-left: 8.500px; }

.t-clock {
  width: 76px;
  margin-left: 2.500px;
  display: flex;
  flex-direction: column;
  align-items: center;
  line-height: 18px;
}

.t-note {
  margin-left: 11px;
}
```
